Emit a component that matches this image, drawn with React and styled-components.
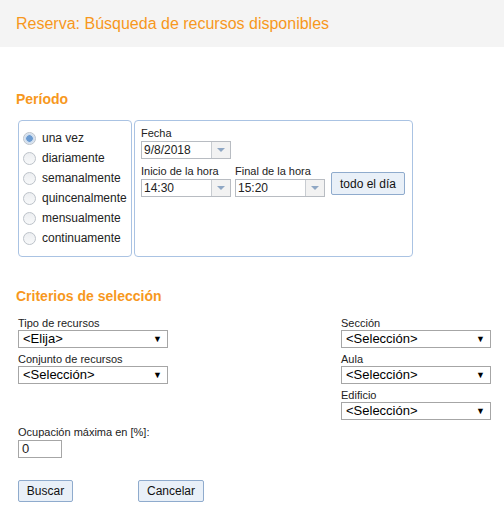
import React from 'react'
import styled, { createGlobalStyle } from 'styled-components'

const Global = createGlobalStyle`
  html, body { margin: 0; padding: 0; background: #fff; }
  body { font-family: "Liberation Sans", Arial, sans-serif; color: #222; }
`

const periods = ['una vez', 'diariamente', 'semanalmente', 'quincenalmente', 'mensualmente', 'continuamente']

const App = () => {
  return (
    <Page>
      <Global />
      <Header>Reserva: Búsqueda de recursos disponibles</Header>

      <SectionTitle $top={45}>Período</SectionTitle>
      <PeriodRow>
        <Box $w={114}>
          <RadioList>
            {periods.map((p, i) => (
              <RadioRow key={p}>
                <Radio $on={i === 0} />
                <span>{p}</span>
              </RadioRow>
            ))}
          </RadioList>
        </Box>
        <Box $w={279}>
          <TimePane>
            <Field>
              <PaneLabel>Fecha</PaneLabel>
              <Combo $w={90}>
                <span>9/8/2018</span>
                <ComboBtn><Arrow /></ComboBtn>
              </Combo>
            </Field>
            <TimeRow>
              <Field>
                <PaneLabel>Inicio de la hora</PaneLabel>
                <Combo $w={90}>
                  <span>14:30</span>
                  <ComboBtn><Arrow /></ComboBtn>
                </Combo>
              </Field>
              <Field>
                <PaneLabel>Final de la hora</PaneLabel>
                <Combo $w={90}>
                  <span>15:20</span>
                  <ComboBtn><Arrow /></ComboBtn>
                </Combo>
              </Field>
              <Button $w={74} $h={23} $mt={9}>todo el día</Button>
            </TimeRow>
          </TimePane>
        </Box>
      </PeriodRow>

      <SectionTitle $top={32}>Criterios de selección</SectionTitle>
      <Criteria>
        <Column>
          <Label>Tipo de recursos</Label>
          <Select>&lt;Elija&gt;</Select>
          <Label>Conjunto de recursos</Label>
          <Select>&lt;Selección&gt;</Select>
        </Column>
        <Column>
          <Label>Sección</Label>
          <Select>&lt;Selección&gt;</Select>
          <Label>Aula</Label>
          <Select>&lt;Selección&gt;</Select>
          <Label>Edificio</Label>
          <Select>&lt;Selección&gt;</Select>
        </Column>
      </Criteria>

      <Occupation>
        <Label>Ocupación máxima en [%]:</Label>
        <NumInput>0</NumInput>
      </Occupation>

      <Actions>
        <Button $w={55} $h={22}>Buscar</Button>
        <Button $w={66} $h={22}>Cancelar</Button>
      </Actions>
    </Page>
  )
}

const Page = styled.div`
  width: 504px; height: 511px; overflow: hidden;
`
const Header = styled.div`
  height: 47px; background: #f4f4f4; color: #f7981d;
  font-size: 16px; line-height: 47px; padding-left: 16px; box-sizing: border-box;
`
const SectionTitle = styled.h3`
  margin: ${p => p.$top}px 0 0 16px; font-size: 14px; font-weight: bold; color: #f7981d; line-height: 15px;
`
const PeriodRow = styled.div`
  display: flex; gap: 2px; margin: 13px 0 0 18px;
`
const Box = styled.div`
  width: ${p => p.$w}px; height: 137px; box-sizing: border-box;
  border: 1px solid #aac3e3; border-radius: 4px;
`
const RadioList = styled.div`
  display: flex; flex-direction: column; gap: 4px; padding: 9px 0 0 4px;
`
const RadioRow = styled.div`
  display: flex; align-items: center; gap: 6px; height: 16px; font-size: 12px; color: #222;
`
const Radio = styled.span`
  width: 13px; height: 13px; border-radius: 50%; box-sizing: border-box;
  border: 1px solid #bcc2c9; background: ${p => p.$on ? 'radial-gradient(circle, #6b9bd1 0 3px, #c7d8ec 3.5px, #e8eef5 6px)' : 'linear-gradient(#eceef1, #f8f9fa)'};
`
const TimePane = styled.div`
  display: flex; flex-direction: column; gap: 4px; padding: 4px 0 0 6px;
`
const Field = styled.div`
  display: flex; flex-direction: column;
`
const TimeRow = styled.div`
  display: flex; align-items: flex-start; gap: 4px;
  & > button { margin-left: 2px; }
`
const Label = styled.div`
  font-size: 11px; color: #222; line-height: 14px; height: 14px;
`
const PaneLabel = styled(Label)`
  line-height: 16px; height: 16px;
`
const Combo = styled.div`
  display: flex; width: ${p => p.$w}px; height: 18px; box-sizing: border-box;
  border: 1px solid #b8bcc2; background: #fff; font-size: 12px;
  span { flex: 1; padding-left: 2px; line-height: 17px; }
`
const ComboBtn = styled.div`
  width: 18px; border-left: 1px solid #c8ccd1; background: #f2f2f2;
  display: flex; align-items: center; justify-content: center;
`
const Arrow = styled.i`
  width: 0; height: 0; border-left: 4px solid transparent; border-right: 4px solid transparent;
  border-top: 4px solid #8fa7c4;
`
const Button = styled.button`
  width: ${p => p.$w}px; height: ${p => p.$h}px; margin-top: ${p => p.$mt || 0}px;
  padding: 0; box-sizing: border-box;
  background: #e9f0f8; border: 1px solid #8fabcd; border-radius: 2px;
  font-family: "Liberation Sans", Arial, sans-serif; font-size: 12px; color: #111;
`
const Criteria = styled.div`
  display: flex; justify-content: space-between; margin: 12px 13px 0 18px;
`
const Column = styled.div`
  display: flex; flex-direction: column; width: 150px;
  & > div:nth-child(odd):not(:first-child) { margin-top: 4px; }
`
const Select = styled.div`
  position: relative; height: 18px; box-sizing: border-box;
  border: 1px solid #a6a6a6; background: #fff; font-size: 13px; color: #000;
  padding-left: 4px; line-height: 16px;
  &::after { content: '▼'; position: absolute; right: 5px; top: 0; font-size: 9px; }
`
const Occupation = styled.div`
  margin: 5px 0 0 18px;
`
const NumInput = styled.div`
  width: 44px; height: 18px; box-sizing: border-box; border: 1px solid #a6a6a6;
  font-size: 13px; padding-left: 3px; line-height: 16px; margin-top: 1px;
`
const Actions = styled.div`
  display: flex; gap: 65px; margin: 22px 0 0 18px;
`

export default App
